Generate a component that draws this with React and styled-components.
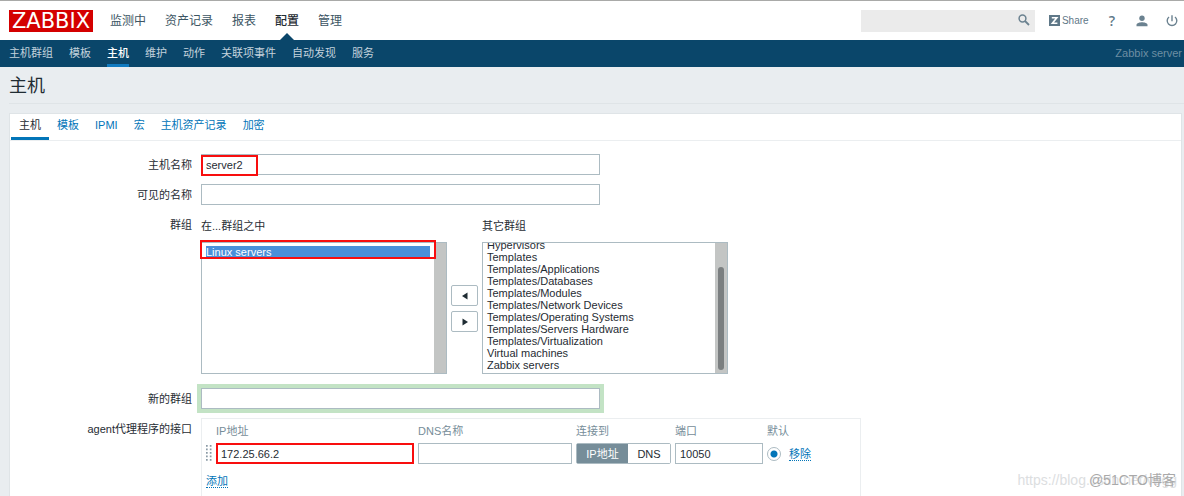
import { useLayoutEffect, useRef } from 'react'
import styled, { createGlobalStyle } from 'styled-components'

const mainMenu = ['监测中', '资产记录', '报表', '配置', '管理']
const subMenu = ['主机群组', '模板', '主机', '维护', '动作', '关联项事件', '自动发现', '服务']
const tabs = ['主机', '模板', 'IPMI', '宏', '主机资产记录', '加密']
const otherGroups = [
  'Discovered hosts',
  'Hypervisors',
  'Templates',
  'Templates/Applications',
  'Templates/Databases',
  'Templates/Modules',
  'Templates/Network Devices',
  'Templates/Operating Systems',
  'Templates/Servers Hardware',
  'Templates/Virtualization',
  'Virtual machines',
  'Zabbix servers'
]

const Header = () => (
  <TopBar>
    <Logo href='#'>ZABBIX</Logo>
    <MainNav>
      {mainMenu.map(item => (
        <MainLink key={item} href='#' $active={item === '配置'}>
          {item}
        </MainLink>
      ))}
    </MainNav>
    <Tools>
      <Search>
        <input type='text' aria-label='搜索' />
        <button type='button' aria-label='搜索'>
          <svg width='12' height='12' viewBox='0 0 12 12' fill='none' stroke='#6b8290'>
            <circle cx='4.5' cy='4.5' r='3.4' strokeWidth='1.5' />
            <path d='M7 7l4 4' strokeWidth='1.8' />
          </svg>
        </button>
      </Search>
      <Share href='#'>
        <svg width='11' height='11' viewBox='0 0 11 11'>
          <path fill='#5f7888' d='M0 0h11v11H0z' />
          <path fill='none' stroke='#fff' strokeWidth='1.6' d='M2.8 2.8h5L3.4 8.2h5' />
        </svg>
        Share
      </Share>
      <Help href='#'>?</Help>
      <IconLink href='#' aria-label='用户'>
        <svg width='12' height='12' viewBox='0 0 12 12' fill='#6b8290'>
          <circle cx='6' cy='3.2' r='2.7' />
          <path d='M0.5 11.2V9.8C0.5 8 3.6 7.2 6 7.2s5.5 .8 5.5 2.6v1.4z' />
        </svg>
      </IconLink>
      <IconLink href='#' aria-label='退出'>
        <svg width='12' height='12' viewBox='0 0 12 12' fill='none' stroke='#6b8290' strokeWidth='1.4'>
          <path d='M6 0.3v6M3 2a4.8 4.8 0 1 0 6 0' />
        </svg>
      </IconLink>
    </Tools>
  </TopBar>
)

const GroupList = ({ id, label, items, selected, scrolled }) => {
  const ref = useRef(null)

  useLayoutEffect(() => {
    if (scrolled) ref.current.scrollTop = ref.current.scrollHeight
  }, [scrolled])

  return (
    <Group>
      <label htmlFor={id}>{label}</label>
      <ListFrame>
        <List id={id} ref={ref} multiple size={10} defaultValue={selected}>
          {items.map(item => (
            <option key={item} value={item}>
              {item}
            </option>
          ))}
        </List>
        <Track>{scrolled && <Thumb />}</Track>
      </ListFrame>
    </Group>
  )
}

const Interfaces = () => (
  <InterfaceBox>
    <InterfaceTable>
      <thead>
        <tr>
          <th />
          <th id='col-ip'>IP地址</th>
          <th id='col-dns'>DNS名称</th>
          <th>连接到</th>
          <th id='col-port'>端口</th>
          <th id='col-default'>默认</th>
          <th />
        </tr>
      </thead>
      <tbody>
        <tr>
          <td>
            <svg width='6' height='17' viewBox='0 0 6 17' fill='#8a9aa5'>
              {[0, 3.5, 7, 10.5, 14].map(y => (
                <path key={y} d={`M0 ${y}h1.7v1.7h-1.7zM3.8 ${y}h1.7v1.7h-1.7z`} />
              ))}
            </svg>
          </td>
          <td>
            <Marked $full>
              <Field type='text' aria-labelledby='col-ip' defaultValue='172.25.66.2' $width={198} />
            </Marked>
          </td>
          <td>
            <Field type='text' aria-labelledby='col-dns' $width={154} />
          </td>
          <td>
            <Segmented>
              <Segment type='button' $on>
                IP地址
              </Segment>
              <Segment type='button'>DNS</Segment>
            </Segmented>
          </td>
          <td>
            <Field type='text' aria-labelledby='col-port' defaultValue='10050' $width={88} />
          </td>
          <td>
            <Radio type='radio' aria-labelledby='col-default' defaultChecked />
          </td>
          <td>
            <ActionLink href='#'>移除</ActionLink>
          </td>
        </tr>
      </tbody>
    </InterfaceTable>
    <ActionLink href='#'>添加</ActionLink>
  </InterfaceBox>
)

const App = () => (
  <Page>
    <GlobalStyle />
    <Header />
    <SubNav>
      {subMenu.map(item => (
        <SubLink key={item} href='#' $active={item === '主机'}>
          {item}
        </SubLink>
      ))}
      <ServerName>Zabbix server</ServerName>
    </SubNav>
    <Title>主机</Title>
    <Panel>
      <Tabs>
        {tabs.map(tab => (
          <Tab key={tab} href='#' $active={tab === '主机'}>
            {tab}
          </Tab>
        ))}
      </Tabs>
      <Form>
        <Row>
          <label htmlFor='host'>主机名称</label>
          <Marked>
            <Field id='host' type='text' defaultValue='server2' $width={399} />
          </Marked>
        </Row>
        <Row>
          <label htmlFor='visible'>可见的名称</label>
          <Field id='visible' type='text' $width={399} />
        </Row>
        <Row>
          <span>群组</span>
          <GroupPicker>
            <MarkedItem>
              <GroupList id='in' label='在...群组之中' items={['Linux servers']} selected={['Linux servers']} />
            </MarkedItem>
            <Movers>
              <button type='button' aria-label='左移'>
                <svg width='6' height='8' viewBox='0 0 6 8'>
                  <path d='M5.5 0.5v7L0 4z' fill='#1f2c33' />
                </svg>
              </button>
              <button type='button' aria-label='右移'>
                <svg width='6' height='8' viewBox='0 0 6 8'>
                  <path d='M0.5 0.5v7L6 4z' fill='#1f2c33' />
                </svg>
              </button>
            </Movers>
            <GroupList id='other' label='其它群组' items={otherGroups} selected={[]} scrolled />
          </GroupPicker>
        </Row>
        <Row>
          <label htmlFor='new'>新的群组</label>
          <Field id='new' type='text' $width={399} $focused />
        </Row>
        <Row>
          <span>agent代理程序的接口</span>
          <Interfaces />
        </Row>
      </Form>
    </Panel>
    <BlogMark>https://blog.csdn.net/vogg</BlogMark>
    <SiteMark>@51CTO博客</SiteMark>
  </Page>
)

export default App

const GlobalStyle = createGlobalStyle`
  *, *::before, *::after {
    box-sizing: border-box;
  }

  body {
    margin: 0;
    background: #e9edf0;
    color: #1f2c33;
    font: 11px/14px 'Liberation Sans', 'Noto Sans CJK SC', sans-serif;
  }

  input, select, button {
    margin: 0;
    color: inherit;
    font: inherit;
  }

  a {
    text-decoration: none;
  }
`

const Page = styled.div`
  position: relative;
  display: flex;
  flex-direction: column;
  height: 100vh;
  overflow: hidden;
  border-top: 1px solid #a9aaa8;

  > * {
    flex-shrink: 0;
  }
`

const TopBar = styled.header`
  display: flex;
  align-items: center;
  height: 39px;
  padding-left: 9px;
  background: #fff;
`

const Logo = styled.a`
  width: 84px;
  height: 22px;
  background: #d40000;
  color: #fff;
  font: 21px/22px 'DejaVu Sans', sans-serif;
  text-align: center;
`

const MainNav = styled.nav`
  display: flex;
  align-self: stretch;
  gap: 19px;
  padding-left: 17px;
`

const MainLink = styled.a`
  position: relative;
  color: ${p => (p.$active ? '#1f2c33' : '#3c5563')};
  font-size: 12px;
  font-weight: ${p => (p.$active ? 500 : 400)};
  line-height: 40px;

  &::after {
    content: '';
    display: ${p => (p.$active ? 'block' : 'none')};
    position: absolute;
    bottom: 0;
    left: 50%;
    margin-left: -7px;
    border: 7px solid transparent;
    border-top: 0;
    border-bottom-color: #0a466a;
  }
`

const Tools = styled.div`
  display: flex;
  align-items: center;
  margin-left: auto;
  padding-right: 6px;
  color: #5f7888;
`

const Search = styled.div`
  display: flex;
  width: 174px;
  height: 22px;
  margin-right: 14px;
  background: #ebebeb;

  input {
    flex: 1;
    min-width: 0;
    border: 0;
    background: none;
  }

  button {
    display: flex;
    padding: 4px 5px;
    border: 0;
    background: none;
  }
`

const Share = styled.a`
  display: flex;
  gap: 2px;
  align-items: center;
  color: #5f7888;
  font-size: 10px;
`

const Help = styled.a`
  padding: 0 21px 0 20px;
  color: #5f7888;
  font: 600 14px/20px 'Open Sans', sans-serif;
`

const IconLink = styled.a`
  display: flex;

  & + & {
    margin-left: 18px;
  }
`

const SubNav = styled.nav`
  display: flex;
  gap: 16px;
  height: 27px;
  padding: 0 2px 0 9px;
  background: #0a466a;
`

const SubLink = styled.a`
  border-bottom: 3px solid ${p => (p.$active ? '#0f7ac0' : 'transparent')};
  color: ${p => (p.$active ? '#fff' : '#c3d2dc')};
  font-weight: ${p => (p.$active ? 500 : 400)};
  line-height: 27px;
`

const ServerName = styled.span`
  margin-left: auto;
  color: #6d8ea3;
  line-height: 27px;
`

const Title = styled.h1`
  height: 37px;
  margin: 0 0 9px 9px;
  border-bottom: 1px solid #dfe4e7;
  font-size: 18px;
  font-weight: 400;
  line-height: 39px;
`

const Panel = styled.main`
  flex-grow: 1;
  margin: 0 2px 0 9px;
  border: 1px solid #dfe4e7;
  background: #fff;
`

const Tabs = styled.nav`
  display: flex;
  padding-left: 1px;
  border-bottom: 1px solid #ebeef0;
`

const Tab = styled.a`
  padding: 0 8px;
  border-bottom: 3px solid ${p => (p.$active ? '#0275b8' : 'transparent')};
  color: ${p => (p.$active ? '#1f2c33' : '#0275b8')};
  line-height: 23px;
`

const Form = styled.form`
  display: grid;
  gap: 9px;
  padding-top: 13px;
`

const Row = styled.div`
  display: grid;
  grid-template-columns: 182px 1fr;
  gap: 9px;
  align-items: start;

  > :first-child {
    height: 21px;
    line-height: 22px;
    text-align: right;
  }
`

const Field = styled.input`
  display: block;
  width: ${p => p.$width}px;
  height: 21px;
  padding: 0 4px;
  border: 1px solid #acbbc2;
  background: #fff;
  outline: 0;
  box-shadow: ${p => (p.$focused ? '0 0 0 4px #c3e3c5' : 'none')};
`

const Marked = styled.div`
  position: relative;

  &::after {
    content: '';
    position: absolute;
    top: ${p => (p.$full ? 0 : 1)}px;
    left: 0;
    width: ${p => (p.$full ? '100%' : '57px')};
    height: 21px;
    border: 2px solid #f80e0e;
    pointer-events: none;
  }
`

const MarkedItem = styled.div`
  position: relative;

  &::after {
    content: '';
    position: absolute;
    top: 26px;
    left: -1px;
    width: 236px;
    height: 19px;
    border: 2px solid #f80e0e;
    pointer-events: none;
  }
`

const GroupPicker = styled.div`
  display: flex;
  margin-bottom: 5px;
`

const Group = styled.div`
  width: 246px;

  label {
    display: block;
    height: 28px;
    line-height: 24px;
  }
`

const ListFrame = styled.div`
  display: flex;
  height: 132px;
  border: 1px solid #acbbc2;
`

const List = styled.select`
  flex: 1;
  min-width: 0;
  height: 100%;
  padding: 3px 4px 2px;
  border: 0;
  outline: 0;
  background: #fff;
  scrollbar-width: none;

  option {
    min-height: 12px;
    height: 12px;
    padding: 0;
    line-height: 12px;
  }

  option:checked {
    background: #4a90d9 linear-gradient(#4a90d9, #4a90d9);
    color: #fff;
    -webkit-text-fill-color: #fff;
  }
`

const Track = styled.div`
  display: flex;
  justify-content: center;
  align-items: flex-end;
  width: 12px;
  padding-bottom: 3px;
  background: #c3c5c4;
`

const Thumb = styled.div`
  width: 6px;
  height: 103px;
  border-radius: 3px;
  background: #7b7f80;
`

const Movers = styled.div`
  display: grid;
  gap: 5px;
  align-content: start;
  padding: 71px 4px 0 4px;

  button {
    display: flex;
    justify-content: center;
    align-items: center;
    width: 27px;
    height: 21px;
    padding: 0;
    border: 1px solid #acbbc2;
    border-radius: 2px;
    background: #fff;
  }
`

const InterfaceBox = styled.div`
  max-width: 660px;
  padding: 4px 4px 24px;
  border: 1px solid #ebeef0;
`

const InterfaceTable = styled.table`
  margin-bottom: 10px;
  border-collapse: collapse;

  th {
    height: 20px;
    padding: 0;
    color: #768d99;
    font-weight: 400;
    line-height: 16px;
    text-align: left;
    vertical-align: top;
  }

  td {
    padding: 0 4px 0 0;
  }

  svg {
    display: block;
  }
`

const Segmented = styled.div`
  display: flex;
  width: 95px;
  height: 21px;
  border: 1px solid #acbbc2;
  border-radius: 2px;
`

const Segment = styled.button`
  flex: ${p => (p.$on ? '0 0 51px' : 1)};
  padding: 0;
  border: 0;
  background: ${p => (p.$on ? '#768d99' : '#fff')};
  color: ${p => (p.$on ? '#fff' : '#1f2c33')};
`

const Radio = styled.input`
  display: block;
  appearance: none;
  width: 14px;
  height: 14px;
  margin-right: 4px;
  border: 1px solid #acbbc2;
  border-radius: 50%;
  background: radial-gradient(circle, #0275b8 3px, #fff 4px);
`

const ActionLink = styled.a`
  border-bottom: 1px dotted #0275b8;
  color: #0275b8;
`

const BlogMark = styled.span`
  position: absolute;
  right: 7px;
  bottom: 7px;
  color: #dcdedf;
  font-size: 14px;
  line-height: 18px;
`

const SiteMark = styled.span`
  position: absolute;
  right: 8px;
  bottom: 7px;
  color: #a9a9a9;
  font-size: 14px;
  line-height: 18px;
`
